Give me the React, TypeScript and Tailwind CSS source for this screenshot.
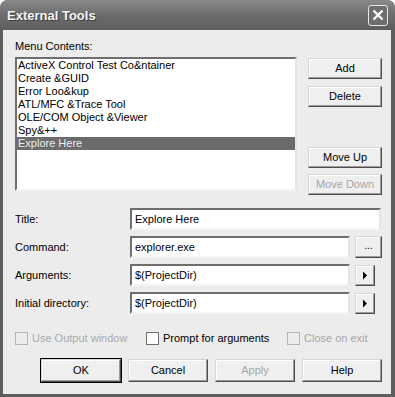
import React from "react";

const items = [
  "ActiveX Control Test Co&ntainer",
  "Create &GUID",
  "Error Loo&kup",
  "ATL/MFC &Trace Tool",
  "OLE/COM Object &Viewer",
  "Spy&++",
  "Explore Here",
];

const btn =
  "flex items-center justify-center bg-[#efefef] border border-t-[#d6d6d6] border-l-[#d6d6d6] border-r-[#4d4d4d] border-b-[#4d4d4d] shadow-[inset_-1px_-1px_0_#9c9c9c,inset_1px_1px_0_#ffffff]";

const sunken =
  "bg-white border-2 border-t-[#6e6e6e] border-l-[#6e6e6e] border-r-[#e4e4e4] border-b-[#f4f4f4]";

function Button(props: { label: string; w: string; h: string; disabled?: boolean; def?: boolean }) {
  return (
    <div
      className={`${btn} ${props.w} ${props.h} ${props.disabled ? "text-[#a6a6a6]" : "text-black"} ${
        props.def ? "outline outline-1 outline-black" : ""
      }`}
    >
      {props.label}
    </div>
  );
}

function Field(props: { label: string; value: string; width: string; extra?: "dots" | "arrow" }) {
  return (
    <div className="flex items-center h-[22px]">
      <div className="w-[115px] text-black">{props.label}</div>
      <div className={`${sunken} ${props.width} h-[22px] flex items-center pl-[3px]`}>{props.value}</div>
      {props.extra === "dots" && (
        <div className={`${btn} ml-[5px] w-[27px] h-[22px] text-[10px] pb-[3px]`}>...</div>
      )}
      {props.extra === "arrow" && (
        <div className={`${btn} ml-[5px] w-[20px] h-[21px]`}>
          <svg width="6" height="9" viewBox="0 0 6 9">
            <path d="M1 0.5 L5 4.5 L1 8.5 Z" fill="#000" />
          </svg>
        </div>
      )}
    </div>
  );
}

function Check(props: { label: string; disabled?: boolean }) {
  return (
    <div className="flex items-center gap-[4px]">
      <div
        className={`w-[13px] h-[13px] border ${
          props.disabled ? "bg-[#ececec] border-[#b4b4b4]" : "bg-white border-[#6e6e6e]"
        }`}
      />
      <span className={props.disabled ? "text-[#a8a8a8]" : "text-black"}>{props.label}</span>
    </div>
  );
}

export default function App() {
  return (
    <div
      className="w-[395px] h-[397px] bg-white text-[11px] leading-none"
      style={{ fontFamily: '"Liberation Sans", Arial, sans-serif' }}
    >
      <div className="w-[395px] h-[397px] flex flex-col rounded-t-[8px] bg-[#5e5e5e] pl-[3px] pr-[4px] pb-[3px] overflow-hidden">
        <div className="h-[30px] flex items-center justify-between bg-gradient-to-b from-[#8a8a8a] via-[#6c6c6c] to-[#5e5e5e] -ml-[3px] -mr-[4px] pl-[7px] pr-[7px]">
          <span className="text-[13px] font-bold text-[#f4f4f4] [text-shadow:1px_1px_0_#3c3c3c]">External Tools</span>
          <div className="w-[20px] h-[21px] rounded-[3px] border border-[#e6e6e6] bg-[#6e6e6e] flex items-center justify-center">
            <svg width="12" height="12" viewBox="0 0 12 12">
              <path d="M1.5 1.5 L10.5 10.5 M10.5 1.5 L1.5 10.5" stroke="#ffffff" strokeWidth="2.4" />
            </svg>
          </div>
        </div>
        <div className="flex-1 bg-[#ececec] pl-[12px] pr-[9px] pt-[11px]">
          <div className="h-[16px] text-black">Menu Contents:</div>
          <div className="flex">
            <div className={`${sunken} w-[282px] h-[134px]`}>
              {items.map((it, i) => (
                <div
                  key={i}
                  className={`h-[13px] flex items-center pl-[1px] ${
                    i === items.length - 1 ? "bg-[#6b6b6b] text-[#ececec]" : "text-black"
                  }`}
                >
                  {it}
                </div>
              ))}
            </div>
            <div className="ml-[11px] flex flex-col pt-[1px]">
              <Button label="Add" w="w-[74px]" h="h-[21px]" />
              <div className="h-[7px]" />
              <Button label="Delete" w="w-[74px]" h="h-[21px]" />
              <div className="h-[40px]" />
              <Button label="Move Up" w="w-[74px]" h="h-[21px]" />
              <div className="h-[6px]" />
              <Button label="Move Down" w="w-[74px]" h="h-[21px]" disabled />
            </div>
          </div>
          <div className="flex flex-col gap-[6px] mt-[13px]">
            <Field label="Title:" value="Explore Here" width="w-[251px]" />
            <Field label="Command:" value="explorer.exe" width="w-[220px]" extra="dots" />
            <Field label="Arguments:" value="$(ProjectDir)" width="w-[220px]" extra="arrow" />
            <Field label="Initial directory:" value="$(ProjectDir)" width="w-[220px]" extra="arrow" />
          </div>
          <div className="flex items-center mt-[18px] h-[13px]">
            <div className="w-[131px]">
              <Check label="Use Output window" disabled />
            </div>
            <div className="w-[141px]">
              <Check label="Prompt for arguments" />
            </div>
            <Check label="Close on exit" disabled />
          </div>
          <div className="flex justify-end gap-[7px] mt-[14px]">
            <Button label="OK" w="w-[80px]" h="h-[23px]" def />
            <Button label="Cancel" w="w-[80px]" h="h-[23px]" />
            <Button label="Apply" w="w-[80px]" h="h-[23px]" disabled />
            <Button label="Help" w="w-[80px]" h="h-[23px]" />
          </div>
        </div>
      </div>
    </div>
  );
}
